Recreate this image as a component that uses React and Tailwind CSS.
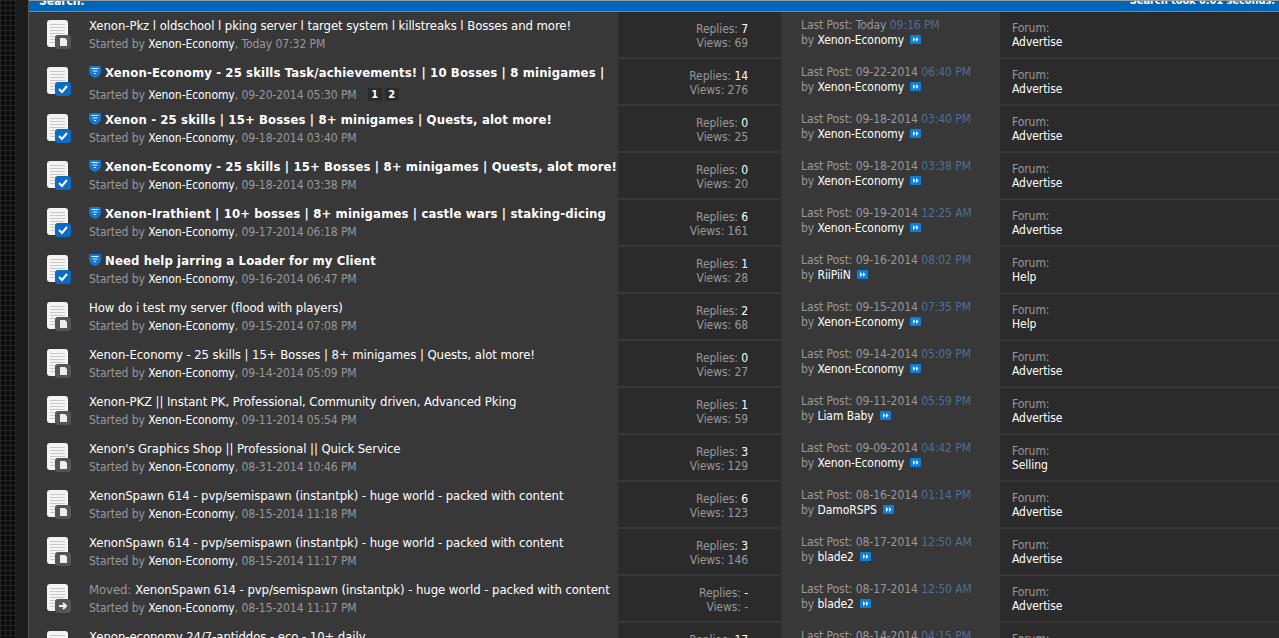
import React from 'react';

const rows = [
  { icon: 'doc', title: 'Xenon-Pkz l oldschool l pking server l target system l killstreaks l Bosses and more!', date: 'Today 07:32 PM', replies: '7', views: '69', lastDate: 'Today', lastTime: '09:16 PM', lastBy: 'Xenon-Economy', forum: 'Advertise' },
  { icon: 'check', bold: true, pages: true, title: 'Xenon-Economy - 25 skills Task/achievements! | 10 Bosses | 8 minigames |', date: '09-20-2014 05:30 PM', replies: '14', views: '276', lastDate: '09-22-2014', lastTime: '06:40 PM', lastBy: 'Xenon-Economy', forum: 'Advertise' },
  { icon: 'check', bold: true, title: 'Xenon - 25 skills | 15+ Bosses | 8+ minigames | Quests, alot more!', date: '09-18-2014 03:40 PM', replies: '0', views: '25', lastDate: '09-18-2014', lastTime: '03:40 PM', lastBy: 'Xenon-Economy', forum: 'Advertise' },
  { icon: 'check', bold: true, title: 'Xenon-Economy - 25 skills | 15+ Bosses | 8+ minigames | Quests, alot more!', date: '09-18-2014 03:38 PM', replies: '0', views: '20', lastDate: '09-18-2014', lastTime: '03:38 PM', lastBy: 'Xenon-Economy', forum: 'Advertise' },
  { icon: 'check', bold: true, title: 'Xenon-Irathient | 10+ bosses | 8+ minigames | castle wars | staking-dicing', date: '09-17-2014 06:18 PM', replies: '6', views: '161', lastDate: '09-19-2014', lastTime: '12:25 AM', lastBy: 'Xenon-Economy', forum: 'Advertise' },
  { icon: 'check', bold: true, title: 'Need help jarring a Loader for my Client', date: '09-16-2014 06:47 PM', replies: '1', views: '28', lastDate: '09-16-2014', lastTime: '08:02 PM', lastBy: 'RiiPiiN', forum: 'Help' },
  { icon: 'doc', title: 'How do i test my server (flood with players)', date: '09-15-2014 07:08 PM', replies: '2', views: '68', lastDate: '09-15-2014', lastTime: '07:35 PM', lastBy: 'Xenon-Economy', forum: 'Help' },
  { icon: 'doc', title: 'Xenon-Economy - 25 skills | 15+ Bosses | 8+ minigames | Quests, alot more!', date: '09-14-2014 05:09 PM', replies: '0', views: '27', lastDate: '09-14-2014', lastTime: '05:09 PM', lastBy: 'Xenon-Economy', forum: 'Advertise' },
  { icon: 'doc', title: 'Xenon-PKZ || Instant PK, Professional, Community driven, Advanced Pking', date: '09-11-2014 05:54 PM', replies: '1', views: '59', lastDate: '09-11-2014', lastTime: '05:59 PM', lastBy: 'Liam Baby', forum: 'Advertise' },
  { icon: 'doc', title: "Xenon's Graphics Shop || Professional || Quick Service", date: '08-31-2014 10:46 PM', replies: '3', views: '129', lastDate: '09-09-2014', lastTime: '04:42 PM', lastBy: 'Xenon-Economy', forum: 'Selling' },
  { icon: 'doc', title: 'XenonSpawn 614 - pvp/semispawn (instantpk) - huge world - packed with content', date: '08-15-2014 11:18 PM', replies: '6', views: '123', lastDate: '08-16-2014', lastTime: '01:14 PM', lastBy: 'DamoRSPS', forum: 'Advertise' },
  { icon: 'doc', title: 'XenonSpawn 614 - pvp/semispawn (instantpk) - huge world - packed with content', date: '08-15-2014 11:17 PM', replies: '3', views: '146', lastDate: '08-17-2014', lastTime: '12:50 AM', lastBy: 'blade2', forum: 'Advertise' },
  { icon: 'moved', moved: true, title: 'XenonSpawn 614 - pvp/semispawn (instantpk) - huge world - packed with content', date: '08-15-2014 11:17 PM', replies: '-', views: '-', lastDate: '08-17-2014', lastTime: '12:50 AM', lastBy: 'blade2', forum: 'Advertise' },
  { icon: 'doc', title: 'Xenon-economy 24/7-antiddos - eco - 10+ daily', date: '08-14-2014 04:10 PM', replies: '17', views: '310', lastDate: '08-14-2014', lastTime: '04:15 PM', lastBy: 'blade2', forum: 'Advertise' },
];

function TopicIcon({ type }) {
  return (
    <svg width="26" height="30" viewBox="0 0 26 30" className="shrink-0">
      <rect x="1" y="0" width="21" height="27" rx="3" fill="#f4f4f4" />
      {[4, 7, 10, 13, 16, 19, 22].map((y) => (
        <rect key={y} x="4" y={y} width="15" height="1" fill="#c9c9c9" />
      ))}
      {type === 'check' ? (
        <>
          <rect x="9" y="15" width="16" height="14" rx="3" fill="#0a6cc4" />
          <path d="M13 22l3 3 5-6" fill="none" stroke="#fff" strokeWidth="2" />
        </>
      ) : (
        <>
          <rect x="9" y="15" width="16" height="14" rx="3" fill="#555" />
          {type === 'moved' ? (
            <path d="M13 22h7M17 19l3 3-3 3" fill="none" stroke="#eee" strokeWidth="2" />
          ) : (
            <path d="M14 18h5l2 2v6h-7z" fill="#eee" />
          )}
        </>
      )}
    </svg>
  );
}

function ShieldIcon() {
  return (
    <svg width="12" height="12" viewBox="0 0 12 12" className="shrink-0 mb-[2px]">
      <path d="M0 1.5Q0 0 1.5 0h9Q12 0 12 1.5V5Q12 10 6 12 0 10 0 5z" fill="#1479d4" />
      <path d="M2.5 2.5h7M3.5 5h5M5 7.5h2" stroke="#dff0ff" strokeWidth="1" />
    </svg>
  );
}

function LastIcon() {
  return (
    <svg width="11" height="9" viewBox="0 0 11 9" className="mb-[2px]">
      <rect width="11" height="9" rx="1" fill="#0b7fdc" />
      <path d="M3 2l2.5 2.5L3 7zM6 2l2.5 2.5L6 7z" fill="#e8f4ff" />
    </svg>
  );
}

function Row({ row }) {
  return (
    <div className="flex h-[47px]">
      <div className="w-[589px] flex pl-[17px] pt-[8px] overflow-hidden">
        <div className="w-[43px] shrink-0"><TopicIcon type={row.icon} /></div>
        <div className="min-w-0 -mt-[3px]">
          <div className={`h-[18px] leading-[18px] flex items-center gap-[4px] whitespace-nowrap text-white text-[13px] ${row.bold ? 'font-bold tracking-[0.13px]' : 'tracking-[-0.07px]'}`}>
            {row.bold && <ShieldIcon />}
            {row.moved && <span className="text-[#999]">Moved:</span>}
            <span>{row.title}</span>
          </div>
          <div className={`flex items-center h-[18px] leading-[18px] text-[#999] whitespace-nowrap ${row.pages ? 'mt-[4px]' : ''}`}>
            <span>Started by <span className="text-white">Xenon-Economy</span>, {row.date}</span>
            {row.pages && (
              <span className="flex ml-[11px] mb-[2px] gap-[3px] text-white text-[11px] font-bold">
                <span className="w-[14px] h-[13px] leading-[13px] text-center bg-[#2b2b2b]">1</span>
                <span className="w-[14px] h-[13px] leading-[13px] text-center bg-[#2b2b2b]">2</span>
              </span>
            )}
          </div>
        </div>
      </div>
      <div className="w-[163px] h-[45px] bg-[#2b2b2b] text-[#999] text-right pr-[33px] pt-[10px] leading-[14px]">
        <div>Replies: <span className="text-white">{row.replies}</span></div>
        <div>Views: {row.views}</div>
      </div>
      <div className="w-[219px] pl-[20px] pt-[6px] leading-[15px] text-[#999]">
        <div>Last Post: {row.lastDate} <span className="text-[#4f6f94]">{row.lastTime}</span></div>
        <div className="flex items-center gap-[6px]">
          <span>by <span className="text-white">{row.lastBy}</span></span>
          <LastIcon />
        </div>
      </div>
      <div className="flex-1 h-[46px] bg-[#2b2b2b] border-b border-[#333] pl-[12px] pt-[9px] leading-[14px] text-[#999]">
        <div>Forum:</div>
        <div className="text-white">{row.forum}</div>
      </div>
    </div>
  );
}

export default function App() {
  return (
    <div className="h-[638px] w-[1279px] overflow-hidden flex bg-[#383838] text-[12px] tracking-[-0.07px] font-['DejaVu_Sans_Condensed','DejaVu_Sans',sans-serif]">
      <div className="w-[16px] shrink-0 bg-[#0c0c0c] bg-[linear-gradient(#242424_1px,transparent_1px),linear-gradient(90deg,#242424_1px,transparent_1px)] bg-[size:5px_5px]" />
      <div className="w-[12px] shrink-0 bg-[#1c1c1c]" />
      <div className="flex-1 min-w-0 border-l border-[#555]">
        <div className="h-[12px] overflow-hidden border-t border-t-[#999] border-b border-b-[#5a93c9] bg-[#0065b8] text-white font-bold flex items-end justify-between pl-[10px] pr-[4px]">
          <span className="leading-[14px] mb-[3px]">Search:</span>
          <span className="leading-[14px] mb-[3px] text-[11px]">Search took 0.01 seconds.</span>
        </div>
        {rows.map((row, i) => (
          <Row key={i} row={row} />
        ))}
      </div>
    </div>
  );
}
